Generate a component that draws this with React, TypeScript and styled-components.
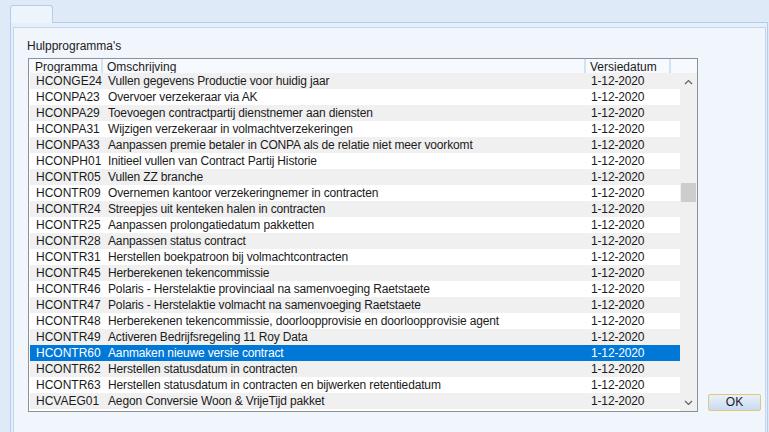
import styled, { createGlobalStyle } from "styled-components";

const rows: [string, string][] = [
  ["HCONGE24", "Vullen gegevens Productie voor huidig jaar"],
  ["HCONPA23", "Overvoer verzekeraar via AK"],
  ["HCONPA29", "Toevoegen contractpartij dienstnemer aan diensten"],
  ["HCONPA31", "Wijzigen verzekeraar in volmachtverzekeringen"],
  ["HCONPA33", "Aanpassen premie betaler in CONPA als de relatie niet meer voorkomt"],
  ["HCONPH01", "Initieel vullen van Contract Partij Historie"],
  ["HCONTR05", "Vullen ZZ branche"],
  ["HCONTR09", "Overnemen kantoor verzekeringnemer in contracten"],
  ["HCONTR24", "Streepjes uit kenteken halen in contracten"],
  ["HCONTR25", "Aanpassen prolongatiedatum pakketten"],
  ["HCONTR28", "Aanpassen status contract"],
  ["HCONTR31", "Herstellen boekpatroon bij volmachtcontracten"],
  ["HCONTR45", "Herberekenen tekencommissie"],
  ["HCONTR46", "Polaris - Herstelaktie provinciaal na samenvoeging Raetstaete"],
  ["HCONTR47", "Polaris - Herstelaktie volmacht na samenvoeging Raetstaete"],
  ["HCONTR48", "Herberekenen tekencommissie, doorloopprovisie en doorloopprovisie agent"],
  ["HCONTR49", "Activeren Bedrijfsregeling 11 Roy Data"],
  ["HCONTR60", "Aanmaken nieuwe versie contract"],
  ["HCONTR62", "Herstellen statusdatum in contracten"],
  ["HCONTR63", "Herstellen statusdatum in contracten en bijwerken retentiedatum"],
  ["HCVAEG01", "Aegon Conversie Woon & VrijeTijd pakket"],
];

const selected = "HCONTR60";

export default function App() {
  return (
    <>
      <GlobalStyle />
      <Window>
        <TabStrip>
          <Tab />
        </TabStrip>
        <Panel>
          <Inner>
            <Content>
              <ListColumn>
                <GroupLabel>Hulpprogramma's</GroupLabel>
                <ListBox>
                  <Header>
                    <HeaderCell>Programma</HeaderCell>
                    <HeaderCell>Omschrijving</HeaderCell>
                    <HeaderCell>Versiedatum</HeaderCell>
                    <HeaderCell />
                  </Header>
                  <Body>
                    <Rows>
                      {rows.map(([code, desc], i) => (
                        <Row key={code} $alt={i % 2 === 0} $selected={code === selected}>
                          <Cell>{code}</Cell>
                          <Cell>{desc}</Cell>
                          <Cell>1-12-2020</Cell>
                        </Row>
                      ))}
                    </Rows>
                    <Scrollbar>
                      <ArrowBox>
                        <svg width="9" height="6" viewBox="0 0 9 6">
                          <polyline points="1,5 4.5,1.5 8,5" fill="none" stroke="#606060" strokeWidth="1.2" />
                        </svg>
                      </ArrowBox>
                      <Track>
                        <Thumb />
                      </Track>
                      <ArrowBox>
                        <svg width="9" height="6" viewBox="0 0 9 6">
                          <polyline points="1,1 4.5,4.5 8,1" fill="none" stroke="#606060" strokeWidth="1.2" />
                        </svg>
                      </ArrowBox>
                    </Scrollbar>
                  </Body>
                </ListBox>
              </ListColumn>
              <OkButton>OK</OkButton>
            </Content>
          </Inner>
        </Panel>
      </Window>
    </>
  );
}

const GlobalStyle = createGlobalStyle`
  body {
    margin: 0;
    background: #dfeaf9;
    font-family: "Liberation Sans", Arial, sans-serif;
    font-size: 12px;
    color: #1b1b1b;
  }
`;

const Window = styled.div`
  width: 769px;
  height: 432px;
  overflow: hidden;
  background: #dfeaf9;
`;

const TabStrip = styled.div`
  display: flex;
  align-items: flex-end;
  height: 22px;
  padding-left: 10px;
  box-sizing: border-box;
`;

const Tab = styled.div`
  width: 43px;
  height: 18px;
  box-sizing: border-box;
  border: 1px solid #b5cceb;
  border-bottom: none;
  border-radius: 3px 3px 0 0;
  background: #eef4fc;
  margin-bottom: -1px;
  position: relative;
  z-index: 1;
`;

const Panel = styled.div`
  margin: 0 1px 0 10px;
  border: 1px solid #b5cceb;
  background: #e6eefa;
  padding: 4px 1px 0 2px;
  height: 420px;
  box-sizing: border-box;
`;

const Inner = styled.div`
  border: 1px solid #c4d6ee;
  background: #f1f6fd;
  height: 100%;
  box-sizing: border-box;
  padding: 10px 4px 0 14px;
`;

const Content = styled.div`
  display: flex;
  align-items: flex-end;
  gap: 10px;
`;

const ListColumn = styled.div`
  display: flex;
  flex-direction: column;
  width: 671px;
`;

const GroupLabel = styled.div`
  line-height: 16px;
  margin: 0 0 4px -1px;
`;

const ListBox = styled.div`
  border: 1px solid #8a9098;
  background: #ffffff;
  display: flex;
  flex-direction: column;
  height: 354px;
  box-sizing: border-box;
  overflow: hidden;
`;

const Header = styled.div`
  display: grid;
  grid-template-columns: 74px 483px 85px 1fr;
  height: 14px;
  background: #f6f9fe;
`;

const HeaderCell = styled.div`
  padding: 1px 0 0 6px;
  line-height: 14px;
  border-right: 2px solid #d3e1f2;
  white-space: nowrap;
  overflow: hidden;
  &:nth-child(2),
  &:nth-child(3) {
    padding-left: 4px;
  }
  &:last-child {
    border-right: none;
  }
`;

const Body = styled.div`
  display: flex;
  flex: 1;
  min-height: 0;
`;

const Rows = styled.div`
  flex: 1;
  padding-left: 1px;
  background: #ffffff;
`;

const Row = styled.div<{ $alt: boolean; $selected: boolean }>`
  display: grid;
  grid-template-columns: 73px 483px 1fr;
  height: 16px;
  background: ${(p) => (p.$selected ? "#0078d7" : p.$alt ? "#f0f0f0" : "#ffffff")};
  color: ${(p) => (p.$selected ? "#ffffff" : "#1b1b1b")};
`;

const Cell = styled.div`
  padding: 1px 0 0 5px;
  line-height: 15px;
  white-space: nowrap;
  overflow: hidden;
  letter-spacing: -0.15px;
  &:first-child {
    padding-left: 6px;
    letter-spacing: 0;
  }
`;

const Scrollbar = styled.div`
  width: 17px;
  background: #f0f0f0;
  display: flex;
  flex-direction: column;
`;

const ArrowBox = styled.div`
  height: 17px;
  display: flex;
  align-items: center;
  justify-content: center;
`;

const Track = styled.div`
  flex: 1;
  padding-top: 93px;
`;

const Thumb = styled.div`
  width: 15px;
  height: 19px;
  margin-left: 1px;
  background: #cdcdcd;
`;

const OkButton = styled.button`
  width: 53px;
  height: 17px;
  padding: 0;
  margin-bottom: 1px;
  border: 1px solid #e2c774;
  border-radius: 2px;
  background: linear-gradient(#e8f0fb, #c9dbf2);
  font-family: "Liberation Sans", Arial, sans-serif;
  font-size: 12px;
  color: #1b1b1b;
  line-height: 15px;
`;
